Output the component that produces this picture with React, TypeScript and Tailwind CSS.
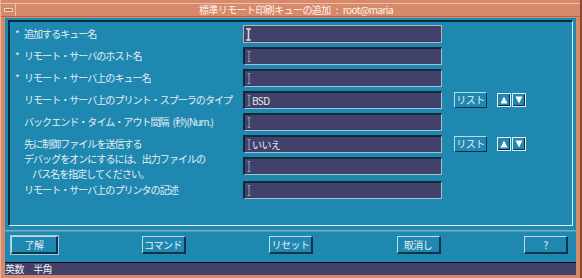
import React from "react";

const TEXT = "text-[#e6eef2]";

function IBeam({ bright }: { bright?: boolean }) {
  return (
    <svg width="5" height="13" viewBox="0 0 5 13" className="shrink-0">
      {bright ? (
        <path d="M0.5 0.5H4.5V1.5H3V11.5H4.5V12.5H0.5V11.5H2V1.5H0.5Z" fill="#c8c8c8" stroke="#e8e8e8" strokeWidth="0.6" />
      ) : (
        <path d="M0.5 1.5H3.5M2 1.5V11.5M0.5 11.5H3.5" stroke="#9c9cb6" strokeWidth="1" fill="none" />
      )}
    </svg>
  );
}

function Field({ value, focused }: { value?: string; focused?: boolean }) {
  return (
    <div
      className={
        "w-[199px] h-[18px] bg-[#414169] flex items-center pl-[2px] shrink-0 " +
        (focused
          ? "border border-[#b4b4b4]"
          : "border-t-2 border-l-2 border-t-[#0d2b3b] border-l-[#0d2b3b] border-b border-r border-b-[#9ec4d4] border-r-[#9ec4d4]")
      }
    >
      <IBeam bright={focused} />
      {value && <span className={"text-[10px] leading-none tracking-[-0.6px] " + TEXT}>{value}</span>}
    </div>
  );
}

function ListButton() {
  return (
    <div className="ml-[12px] w-[33px] h-[16px] flex items-center justify-center border-t border-l border-t-[#b8dcea] border-l-[#b8dcea] border-b border-r border-b-[#0b3446] border-r-[#0b3446] text-[10px] leading-none tracking-[-0.5px] text-[#e6eef2]">
      リスト
    </div>
  );
}

function ArrowBtn({ up }: { up?: boolean }) {
  return (
    <div className="w-[14px] h-[14px] bg-[#e8f0f4] p-[1px] flex">
      <div className="flex-1 bg-[#0d2b3b] pr-[1px] pb-[1px] flex">
        <div className="flex-1 bg-[#1f88b0] flex items-center justify-center">
          <svg width="8" height="8" viewBox="0 0 8 8">
            {up ? <path d="M4 0.5L7.5 7.5H0.5Z" fill="#ffffff" /> : <path d="M0.5 0.5H7.5L4 7.5Z" fill="#ffffff" />}
          </svg>
        </div>
      </div>
    </div>
  );
}

function Row({
  label,
  star,
  value,
  focused,
  list,
  className = "",
}: {
  label: React.ReactNode;
  star?: boolean;
  value?: string;
  focused?: boolean;
  list?: boolean;
  className?: string;
}) {
  return (
    <div className={"h-[18px] flex items-center " + className}>
      <div className="w-[228px] shrink-0 flex items-center">
        <span className={"w-[9px] text-[10px] leading-none " + TEXT}>{star ? "*" : ""}</span>
        <div className={"text-[10px] tracking-[-0.95px] leading-none " + TEXT}>{label}</div>
      </div>
      <Field value={value} focused={focused} />
      {list && (
        <>
          <ListButton />
          <div className="ml-[10px] flex gap-[1px]">
            <ArrowBtn up />
            <ArrowBtn />
          </div>
        </>
      )}
    </div>
  );
}

function Btn({ children, w, def }: { children: React.ReactNode; w: string; def?: boolean }) {
  return (
    <div
      className={
        w +
        " h-[18px] flex items-center justify-center text-[10px] leading-none tracking-[-0.5px] text-[#e6eef2] border-t border-l border-t-[#b8dcea] border-l-[#b8dcea] border-b-2 border-r-2 border-b-[#0b3446] border-r-[#0b3446] " +
        (def ? "outline outline-1 outline-[#9cc8d8]" : "")
      }
    >
      {children}
    </div>
  );
}

export default function App() {
  return (
    <div className="w-[582px] h-[278px] bg-[#d6896b] flex flex-col font-['Noto_Sans_CJK_JP',sans-serif] border-r-2 border-r-[#8a4a30] border-l border-l-[#e8b49c] overflow-hidden">
      {/* title bar */}
      <div className="h-[18px] pt-[3px] flex flex-col">
        <div className="h-[14px] border-t border-t-[#f0c0a8] border-b border-b-[#b06848] flex items-center relative">
          <div className="w-[15px] h-full border-r border-r-[#f0c0a8] flex items-center justify-center">
            <div className="w-[9px] h-[4px] border border-[#f0d0c0] bg-[#c07858]" />
          </div>
          <div className="flex-1 flex justify-center text-[10px] leading-none text-[#fff4ee] tracking-[-0.6px] pr-[4px]">
            <span>標準リモート印刷キューの追加</span>
            <span className="mx-[5px]">:</span>
            <span>root@maria</span>
          </div>
        </div>
      </div>

      {/* body */}
      <div className="mx-[4px] flex-1 bg-[#1f88b0] flex flex-col">
        {/* panel */}
        <div className="mt-[2px] mx-[3px] h-[206px] border-t-2 border-l-2 border-t-[#0b2e40] border-l-[#0b2e40] border-b border-r border-b-[#e4f2f8] border-r-[#e4f2f8] flex flex-col pt-[3px] pl-[5px] gap-[4px]">
          <Row star label="追加するキュー名" focused />
          <Row star label="リモート・サーバのホスト名" />
          <Row star label="リモート・サーバ上のキュー名" />
          <Row label="リモート・サーバ上のプリント・スプーラのタイプ" value="BSD" list />
          <Row
            label={
              <span>
                バックエンド・タイム・アウト間隔<span className="ml-[4px]">(秒)(Num.)</span>
              </span>
            }
          />
          <Row label="先に制御ファイルを送信する" value="いいえ" list />
          <Row
            label={
              <div className="flex flex-col">
                <span className="leading-[15px]">デバッグをオンにするには、出力ファイルの</span>
                <span className="leading-[15px] pl-[8px]">パス名を指定してください。</span>
              </div>
            }
          />
          <Row label="リモート・サーバ上のプリンタの記述" className="mt-[2px]" />
        </div>
        {/* separator */}
        <div className="mt-[4px] h-[1px] bg-[#86a8b8]" />
        <div className="h-[1px] bg-[#3ea0c4]" />
        {/* buttons */}
        <div className="mt-[4px] flex justify-between pl-[6px] pr-[8px]">
          <Btn w="w-[47px]" def>了解</Btn>
          <Btn w="w-[44px]">コマンド</Btn>
          <Btn w="w-[44px]">リセット</Btn>
          <Btn w="w-[44px]">取消し</Btn>
          <Btn w="w-[44px]">?</Btn>
        </div>
        <div className="flex-1" />
        <div className="h-[1px] bg-[#0a0a14]" />
        <div className="h-[12px] bg-[#414169] flex items-center text-[10px] leading-none text-[#eef0f4] tracking-[-0.6px]">
          英数　半角
        </div>
      </div>
      <div className="h-[3px]" />
    </div>
  );
}
